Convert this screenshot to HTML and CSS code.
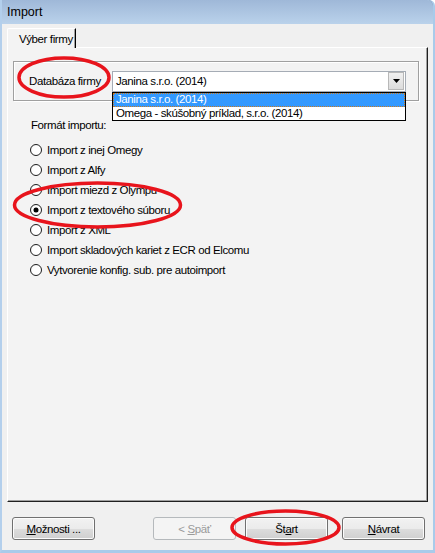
FILE: index.html
```html
<!DOCTYPE html>
<html lang="sk">
<head>
<meta charset="utf-8">
<title>Import</title>
<link rel="stylesheet" href="styles.css">
</head>
<body>
<div class="screen">
  <div class="window">
    <div class="titlebar"><span class="title">Import</span></div>
    <div class="client">
      <div class="tabs"><div class="tab">Výber firmy</div></div>
      <div class="panel">
        <div class="group">
          <span class="label">Databáza firmy</span>
          <div class="combo">
            <span class="combo-value">Janina s.r.o. (2014)</span>
            <span class="combo-btn">
              <svg width="7" height="4" viewBox="0 0 7 4"><path d="M0 0H7L3.5 4Z" fill="#000"/></svg>
            </span>
            <ul class="dropdown">
              <li class="item selected">Janina s.r.o. (2014)</li>
              <li class="item">Omega - skúšobný príklad, s.r.o. (2014)</li>
            </ul>
          </div>
        </div>
        <div class="format-label">Formát importu:</div>
        <ul class="radios">
          <li class="radio-row"><span class="radio"></span><span>Import z inej Omegy</span></li>
          <li class="radio-row"><span class="radio"></span><span>Import z Alfy</span></li>
          <li class="radio-row"><span class="radio"></span><span>Import miezd z Olympu</span></li>
          <li class="radio-row"><span class="radio checked"></span><span>Import z textového súboru</span></li>
          <li class="radio-row"><span class="radio"></span><span>Import z XML</span></li>
          <li class="radio-row"><span class="radio"></span><span>Import skladových kariet z ECR od Elcomu</span></li>
          <li class="radio-row"><span class="radio"></span><span>Vytvorenie konfig. sub. pre autoimport</span></li>
        </ul>
      </div>
      <div class="buttons">
        <button class="btn btn-options"><u>M</u>ožnosti ...</button>
        <button class="btn btn-back" disabled>&lt; <u>S</u>päť</button>
        <button class="btn btn-start">Št<u>a</u>rt</button>
        <button class="btn btn-return"><u>N</u>ávrat</button>
      </div>
    </div>
  </div>
  <svg class="marks" width="435" height="553" viewBox="0 0 435 553">
    <ellipse cx="64" cy="77.5" rx="45" ry="19.5" fill="none" stroke="#e8141c" stroke-width="3.5"/>
    <ellipse cx="97.5" cy="205" rx="83" ry="22" fill="none" stroke="#e8141c" stroke-width="3.5"/>
    <ellipse cx="285.5" cy="527.5" rx="53.5" ry="16.5" fill="none" stroke="#e8141c" stroke-width="3.5"/>
  </svg>
</div>
</body>
</html>
```
FILE: styles.css
```css
* { box-sizing: border-box; }
html, body { margin: 0; padding: 0; background: #fff; }
body {
  font-family: "Liberation Sans", Arial, sans-serif;
  font-size: 11.5px;
  letter-spacing: -0.4px;
  color: #000;
}
.screen { position: relative; width: 435px; height: 553px; overflow: hidden; }
.window {
  width: 435px;
  height: 553px;
  display: flex;
  flex-direction: column;
  background: #b9d1ea;
  border-left: 2px solid #b3cfec;
  border-right: 2px solid #a9cbea;
  border-bottom: 3px solid #a9cbea;
  border-top-right-radius: 6px;
  box-shadow: inset -1px 0 0 #6f8fb5;
}
.titlebar {
  height: 24px;
  flex: none;
  display: flex;
  align-items: center;
  padding-left: 5px;
  background: linear-gradient(#9fb8d8, #bad2eb);
  border-top-right-radius: 6px;
}
.title { font-size: 12.5px; letter-spacing: 0; color: #000; padding-bottom: 1px; }
.client {
  flex: 1;
  background: #f0f0f0;
  padding: 4px 5px 0 5px;
  display: flex;
  flex-direction: column;
}
.tabs { height: 19px; display: flex; flex: none; }
.tab {
  position: relative;
  z-index: 1;
  height: 20px;
  width: 69px;
  padding-left: 11px;
  padding-top: 4px;
  background: #f3f3f3;
  border-top: 1px solid #fff;
  border-left: 1px solid #fff;
  border-right: 1px solid #000;
  box-shadow: inset -1px 0 0 #a0a0a0;
  border-top-left-radius: 2px;
}
.panel {
  height: 455px;
  flex: none;
  background: #f3f3f3;
  border-top: 1px solid #fff;
  border-left: 1px solid #fff;
  border-right: 1px solid #202020;
  border-bottom: 1px solid #202020;
  box-shadow: inset -1px -1px 0 #a0a0a0;
  padding-top: 13px;
  padding-left: 5px;
}
.group {
  width: 406px;
  height: 40px;
  border: 1px solid #a0a0a0;
  box-shadow: 1px 1px 0 #fff, inset 1px 1px 0 #fff;
  display: flex;
  align-items: center;
  padding-left: 15px;
}
.label { width: 83px; }
.combo {
  position: relative;
  width: 294px;
  height: 21px;
  background: #fff;
  border: 1px solid #a5acb5;
  display: flex;
  align-items: center;
  padding-left: 3px;
}
.combo-value { flex: 1; }
.combo-btn {
  width: 16px;
  height: 18px;
  margin-right: 1px;
  background: linear-gradient(#f0f0f0, #dcdcdc);
  border: 1px solid #b8b8b8;
  display: flex;
  align-items: center;
  justify-content: center;
}
.dropdown {
  position: absolute;
  left: -1px;
  top: 20px;
  width: 294px;
  margin: 0;
  padding: 0;
  list-style: none;
  background: #fff;
  border: 1px solid #000;
  z-index: 2;
}
.item { height: 13px; line-height: 13px; padding-left: 3px; }
.item.selected {
  height: 14px;
  background: #3399ff;
  color: #fff;
  outline: 1px dotted #cc7a1f;
  outline-offset: -1px;
}
.format-label { margin-top: 18px; margin-left: 18px; line-height: 13px; }
.radios { list-style: none; margin: 8px 0 0; padding: 0 0 0 17px; }
.radio-row { height: 20px; display: flex; align-items: center; gap: 5px; }
.radio {
  width: 12px;
  height: 12px;
  border-radius: 50%;
  border: 1px solid #1e1e1e;
  background: radial-gradient(circle at 60% 60%, #fff 55%, #e0e0e0 100%);
  display: flex;
  align-items: center;
  justify-content: center;
  flex: none;
}
.radio.checked::after {
  content: "";
  width: 4px;
  height: 4px;
  border-radius: 50%;
  background: #000;
  box-shadow: 0 0 0 0.5px #000;
}
.buttons {
  display: flex;
  margin-top: 15px;
  height: 23px;
}
.btn {
  font-family: "Liberation Sans", Arial, sans-serif;
  font-size: 11.5px;
  letter-spacing: -0.4px;
  width: 83px;
  height: 23px;
  padding: 0;
  color: #000;
  border: 1px solid #707070;
  border-radius: 3px;
  background: linear-gradient(#f2f2f2 0%, #ebebeb 50%, #dddddd 51%, #cfcfcf 100%);
  box-shadow: inset 0 0 0 1px #fcfcfc;
}
.btn u { text-decoration: underline; text-underline-offset: 1px; }
.btn-options { margin-left: 5px; }
.btn-back {
  margin-left: 58px;
  color: #9a9a9a;
  border-color: #b5b9bc;
  background: #f4f4f4;
  box-shadow: none;
}
.btn-start { margin-left: 9px; }
.btn-return { margin-left: 14px; }
.marks { position: absolute; left: 0; top: 0; pointer-events: none; }
```
